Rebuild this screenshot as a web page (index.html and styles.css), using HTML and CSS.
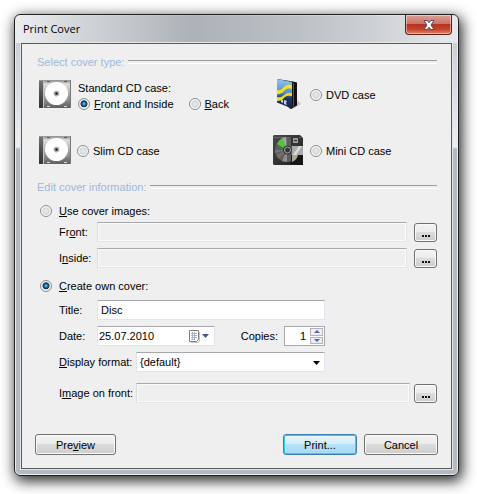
FILE: index.html
```html
<!DOCTYPE html>
<html lang="en">
<head>
  <meta charset="UTF-8" />
  <meta name="viewport" content="width=device-width, initial-scale=1.0"/>
  <title>Print Cover</title>
  <link rel="stylesheet" href="styles.css">
</head>
<body>
  <!-- Shared icon shapes -->
  <svg class="defs" width="0" height="0" aria-hidden="true">
    <defs>
      <linearGradient id="caseFill" x1="0" y1="0" x2="0" y2="1">
        <stop offset="0" stop-color="#858585"/>
        <stop offset="0.15" stop-color="#dedede"/>
        <stop offset="0.5" stop-color="#a8adaa"/>
        <stop offset="1" stop-color="#5e5e5e"/>
      </linearGradient>
      <linearGradient id="spineFill" x1="0" y1="0" x2="0" y2="1">
        <stop offset="0" stop-color="#777"/>
        <stop offset="0.5" stop-color="#4b4f4d"/>
        <stop offset="1" stop-color="#333"/>
      </linearGradient>
      <linearGradient id="dvdFill" x1="0" y1="0" x2="0" y2="1">
        <stop offset="0" stop-color="#8fc4f5"/>
        <stop offset="0.45" stop-color="#5b91cf"/>
        <stop offset="0.65" stop-color="#1b3760"/>
        <stop offset="1" stop-color="#14264a"/>
      </linearGradient>
      <linearGradient id="miniFill" x1="0" y1="0" x2="1" y2="1">
        <stop offset="0" stop-color="#4a4a4a"/>
        <stop offset="0.7" stop-color="#2b2b2b"/>
        <stop offset="1" stop-color="#0b0b0b"/>
      </linearGradient>
      <symbol id="cdCase" viewBox="0 0 32 28">
        <rect width="32" height="28" fill="url(#caseFill)"/>
        <rect width="4" height="28" fill="url(#spineFill)"/>
        <path d="M4.500 0v28" stroke="#c6c6c6"/>
        <path d="M0 .5h32" stroke="#999"/>
        <path d="M8 1.500h3M25 1.500h3" stroke="#555"/>
        <path d="M31.500 0v28" stroke="#777"/>
        <path d="M8 26.500h3M25 26.500h3" stroke="#ddd"/>
        <circle cx="17.500" cy="13.500" r="11.500" fill="#fff"/>
        <circle cx="17.500" cy="13.500" r="3" fill="#b9b9b9"/>
        <circle cx="17.500" cy="13.500" r="1.500" fill="#333"/>
      </symbol>
    </defs>
  </svg>

  <main class="dialog">
    <header class="titlebar">
      <h1>Print Cover</h1>
      <button class="close" type="button" aria-label="Close">
        <svg width="12" height="10" viewBox="0 0 12 10">
          <path d="M1 .5h3.200L6 2.700 7.800.5H11L8 5l3 4.500H7.800L6 7.300 4.200 9.500H1L4 5z" fill="#fff" stroke="#4b4f60"/>
        </svg>
      </button>
    </header>

    <form class="client">
      <h2 class="section-title">Select cover type:</h2>
      <div class="covers">
        <div class="cover">
          <svg class="icon" width="32" height="28"><use href="#cdCase"/></svg>
          <div class="cover-group">
            <span>Standard CD case:</span>
            <div class="choices">
              <label><input type="radio" name="type" checked><span><u>F</u>ront and Inside</span></label>
              <label><input type="radio" name="type"><span><u>B</u>ack</span></label>
            </div>
          </div>
        </div>
        <div class="cover">
          <svg class="icon" width="31" height="32" viewBox="0 0 31 32">
            <path d="M20 18l8 8-9 5z" fill="#999" opacity="0.5"/>
            <path d="M4 1l16 2.500 4 1v23L18 31l-2-1z" fill="#111"/>
            <path d="M4 1l15 3v26.500L4 24.500z" fill="url(#dvdFill)"/>
            <path d="M4 12q4 1 6-2 4-5 9-3v4q-5-2-8 2-3 4-7 3z" fill="#f8e01c"/>
            <path d="M4 19q4 1 7-2 3-3 8-2v3q-5-1-7 1-3 4-8 4z" fill="#f3d923"/>
            <path d="M8 21l2 1v3l-2-1zM11 22l3 1-1 2 1 2-3-1z" fill="#c8d5e8"/>
            <path d="M20.500 5v24" stroke="#555"/>
          </svg>
          <label><input type="radio" name="type"><span>DVD case</span></label>
        </div>
        <div class="cover">
          <svg class="icon" width="32" height="28"><use href="#cdCase"/></svg>
          <label><input type="radio" name="type"><span>Slim CD case</span></label>
        </div>
        <div class="cover">
          <svg class="icon" width="31" height="30" viewBox="0 0 31 30">
            <path d="M1 0h26l3 3v27H1L0 29V1z" fill="url(#miniFill)"/>
            <path d="M1 2.500h27" stroke="#666"/>
            <circle cx="14" cy="15" r="12" fill="#5d5f5c"/>
            <path d="M14 15L4 9q2-4 5-6z" fill="#55c53a"/>
            <path d="M14 15L9 3l4-1z" fill="#a0aaa0"/>
            <path d="M14 15L3 20l3 4z" fill="#7d6a64"/>
            <path d="M14 15l-5 11 5 1z" fill="#8b8e8b"/>
            <path d="M14 15L2 15v3z" fill="#617d7b"/>
            <path d="M18 2h8v9h-8z" fill="#333"/>
            <path d="M20 3h5v5h-5z" fill="#999"/>
            <path d="M21 5.500h3" stroke="#333"/>
            <path d="M18 20h12v9H18z" fill="#161616"/>
            <path d="M19 20h6q-1 5-6 7z" fill="#b1a78f"/>
            <circle cx="14.500" cy="15" r="4.500" fill="#333"/>
            <circle cx="14.500" cy="15" r="3" fill="none" stroke="#aaa"/>
            <path d="M19 11h11v9H19z" fill="#aaa"/>
            <path d="M20 20l6-9h3l-6 9z" fill="#ddd"/>
          </svg>
          <label><input type="radio" name="type"><span>Mini CD case</span></label>
        </div>
      </div>

      <h2 class="section-title">Edit cover information:</h2>
      <div class="source">
        <label><input type="radio" name="source"><span><u>U</u>se cover images:</span></label>
      </div>
      <div class="fields">
        <div class="row">
          <label class="short" for="front">Fr<u>o</u>nt:</label>
          <input class="box grow" id="front" type="text" disabled>
          <button class="btn browse" type="button" aria-label="Browse front image"><i></i><i></i><i></i></button>
        </div>
        <div class="row">
          <label class="short" for="inside">I<u>n</u>side:</label>
          <input class="box grow" id="inside" type="text" disabled>
          <button class="btn browse" type="button" aria-label="Browse inside image"><i></i><i></i><i></i></button>
        </div>
      </div>

      <div class="source">
        <label><input type="radio" name="source" checked><span><u>C</u>reate own cover:</span></label>
      </div>
      <div class="fields">
        <div class="narrow">
          <div class="row">
            <label class="short" for="title">Title:</label>
            <input class="box grow" id="title" type="text" value="Disc">
          </div>
          <div class="row">
            <label class="short" for="date">Date:</label>
            <div class="box date">
              <input id="date" type="text" value="25.07.2010">
              <button type="button" aria-label="Open calendar">
                <svg width="21" height="13" viewBox="0 0 21 13">
                  <path d="M1.500.5h9v9l-2 2h-7z" fill="#fff" stroke="#857f7d"/>
                  <path d="M3 3.500h6M3 5.500h6M3 7.500h6M3 9.500h4M4.500 2v8M6.500 2v8" stroke="#a9b5c4"/>
                  <path d="M11.500 2v9l-1 1.500H3" fill="none" stroke="#c7c3c0"/>
                  <path d="M14 4h7l-3.500 4z" fill="#44598a"/>
                </svg>
              </button>
            </div>
            <label class="copies-label" for="copies">Copies:</label>
            <div class="spin">
              <input id="copies" type="number" value="1" min="1">
              <div class="steps">
                <button type="button" aria-label="More copies"><svg width="6" height="3"><path d="M0 3l3-3 3 3z" fill="#4e68b4"/></svg></button>
                <button type="button" aria-label="Fewer copies"><svg width="6" height="3"><path d="M0 0l3 3 3-3z" fill="#4e68b4"/></svg></button>
              </div>
            </div>
          </div>
          <div class="row">
            <label class="medium" for="format"><u>D</u>isplay format:</label>
            <div class="combo grow">
              <select class="box" id="format"><option>{default}</option></select>
              <svg width="7" height="4"><path d="M0 0h7L3.500 4z" fill="#000"/></svg>
            </div>
          </div>
        </div>
        <div class="row image-row">
          <label class="medium" for="image">I<u>m</u>age on front:</label>
          <input class="box grow" id="image" type="text" disabled>
          <button class="btn browse" type="button" aria-label="Browse image on front"><i></i><i></i><i></i></button>
        </div>
      </div>

      <footer class="actions">
        <button class="btn preview" type="button">Pre<u>v</u>iew</button>
        <button class="btn primary" type="submit">Print...</button>
        <button class="btn" type="button">Cancel</button>
      </footer>
    </form>
  </main>
</body>
</html>
```

FILE: styles.css
```css
* {
  box-sizing: border-box;
}

body {
  margin: 0;
  padding: 14px 18px 18px 14px;
  background-color: #fff;
  color: #000;
  font-family: "Liberation Sans", Arial, sans-serif;
  font-size: 11px;
  line-height: 14px;
}

input, select, button {
  font: inherit;
  color: inherit;
  margin: 0;
}

svg {
  display: block;
  flex: none;
}

.defs {
  position: absolute;
}

/* Window frame */
.dialog {
  padding: 0 6px 6px;
  border: 1px solid #1d1f22;
  border-radius: 6px;
  background:
    linear-gradient(to right, rgba(255, 255, 255, 0.6), rgba(255, 255, 255, 0.3) 30%, rgba(255, 255, 255, 0) 40%, rgba(255, 255, 255, 0.1) 65%, rgba(255, 255, 255, 0.5)) top / 100% 28px no-repeat,
    linear-gradient(#ccd0d4 28px, #eceef0 132px, #b4bac0 134px);
  box-shadow: inset 0 0 0 1px #eceff2, 2px 4px 14px 1px rgba(0, 0, 0, 0.85);
}

.titlebar {
  display: flex;
  justify-content: space-between;
  align-items: flex-start;
  height: 28px;
  padding-left: 2px;
  background: linear-gradient(to right, rgba(160, 166, 172, 0), rgba(160, 166, 172, 0.7) 40%, rgba(160, 166, 172, 0));
}

.titlebar h1 {
  margin: 0;
  font-family: "Open Sans", "Noto Sans", sans-serif;
  font-size: 11px;
  font-weight: normal;
  line-height: 28px;
}

.close {
  display: flex;
  justify-content: center;
  align-items: center;
  width: 47px;
  height: 20px;
  padding: 0;
  border: 1px solid #5c1f1b;
  border-top: none;
  border-radius: 0 0 4px 4px;
  background: linear-gradient(#dba096, #cd7468 45%, #b7331f 50%, #c4432b 75%, #e08466);
  box-shadow: inset 0 0 0 1px rgba(255, 255, 255, 0.45);
}

.client {
  display: flow-root;
  padding: 0 14px 13px 15px;
  border: 1px solid #55585c;
  background-color: #efefef;
  box-shadow: 0 0 0 1px #e6e9ec;
}

/* Section headings with an etched line */
.section-title {
  display: flex;
  align-items: center;
  gap: 4px;
  margin: 11px 0 0;
  color: #9db8dc;
  font-size: 11px;
  font-weight: normal;
}

.section-title::after {
  content: "";
  flex: 1;
  height: 2px;
  border-top: 1px solid #9c9c9c;
  border-bottom: 1px solid #fff;
}

/* Radios */
input[type="radio"] {
  appearance: none;
  flex: none;
  width: 12px;
  height: 12px;
  border: 1px solid #8a8d90;
  border-radius: 50%;
  background: radial-gradient(circle closest-side, #e4e6e8 30%, #cdd1d5 65%, #f8f8f8 80%);
}

input[type="radio"]:checked {
  background: radial-gradient(circle closest-side at 50% 48%, #7ad8f8 0, #1c6fa8 35%, #10304e 65%, #eef0f2 80%);
}

.cover label, .source label {
  display: flex;
  align-items: center;
  gap: 4px;
}

.covers {
  display: grid;
  grid-template-columns: 1fr 164px;
  row-gap: 22px;
  padding: 9px 0 0 2px;
}

.cover {
  display: flex;
  align-items: center;
  gap: 6px;
  height: 34px;
}

.cover .icon {
  margin-bottom: 2px;
}

.cover-group {
  display: flex;
  flex-direction: column;
  gap: 2px;
  padding: 2px 0 0 1px;
}

.choices {
  display: flex;
  gap: 15px;
}

.covers + .section-title {
  margin-top: 12px;
}

.source {
  padding: 10px 0 0 3px;
}

.source label {
  gap: 7px;
}

/* Form rows */
.fields {
  display: flex;
  flex-direction: column;
  gap: 6px;
  padding: 4px 0 0 22px;
}

.source + .fields {
  margin-bottom: 1px;
}

.narrow {
  display: flex;
  flex-direction: column;
  gap: 6px;
  margin: 3px 112px 0 0;
}

.row {
  display: flex;
  align-items: center;
  height: 20px;
}

.short {
  width: 38px;
}

.medium {
  width: 77px;
}

.grow {
  flex: 1;
  min-width: 0;
}

.box {
  height: 20px;
  padding: 0 3px;
  border: 1px solid #dfe5ee;
  border-top-color: #a7a8ae;
  border-radius: 1px;
  background-color: #fff;
}

.box:disabled {
  background-color: #efefef;
  border-color: #a7a8ae #e1e5ec #e1e5ec #d8dce2;
  box-shadow: inset 0 0 0 1px #fbfbfb;
}

.date {
  display: flex;
  align-items: center;
  width: 118px;
  padding: 0 5px 0 1px;
}

.date input, .spin input {
  flex: 1;
  width: 0;
  min-width: 0;
  padding: 0;
  border: none;
  background: none;
}

.date button {
  padding: 0;
  border: none;
  background: none;
}

.copies-label {
  margin-left: auto;
  padding-right: 6px;
}

.spin {
  display: flex;
  width: 41px;
  height: 20px;
  border: 1px solid #a7a8ae;
  background-color: #fff;
}

.spin input {
  appearance: textfield;
  padding-right: 3px;
  text-align: right;
}

.spin input::-webkit-inner-spin-button {
  appearance: none;
}

.steps {
  display: flex;
  flex-direction: column;
  gap: 1px;
  width: 15px;
  padding: 1px;
}

.steps button {
  display: flex;
  flex: 1;
  justify-content: center;
  align-items: center;
  padding: 0;
  border: 1px solid #b4b5ba;
  background-color: #eceef4;
}

.combo {
  position: relative;
}

.combo select {
  display: block;
  width: 100%;
  appearance: none;
}

.combo svg {
  position: absolute;
  top: 9px;
  right: 5px;
}

.image-row {
  margin-top: 5px;
}

/* Buttons */
.btn {
  width: 74px;
  height: 21px;
  padding: 0;
  border: 1px solid #707070;
  border-radius: 3px;
  background: linear-gradient(#f3f3f3, #ebebeb 48%, #dcdcdc 50%, #cdcdcd);
  box-shadow: inset 0 0 0 1px #fafafa;
}

.browse {
  display: flex;
  justify-content: center;
  align-items: flex-end;
  gap: 1px;
  width: 23px;
  height: 19px;
  margin-left: 7px;
  padding-bottom: 4px;
}

.browse i {
  width: 2px;
  height: 2px;
  background-color: #111;
}

.image-row .browse {
  margin-left: 4px;
}

.primary {
  border-color: #3c7fb1;
  background: linear-gradient(#e6f5fd, #d5edfb 48%, #b9e2f8 50%, #a5d8f3);
  box-shadow: inset 0 0 0 1px #34cdfa;
}

.actions {
  display: flex;
  gap: 7px;
  margin: 31px -1px 0 -2px;
}

.preview {
  width: 81px;
  margin-right: auto;
}
```
